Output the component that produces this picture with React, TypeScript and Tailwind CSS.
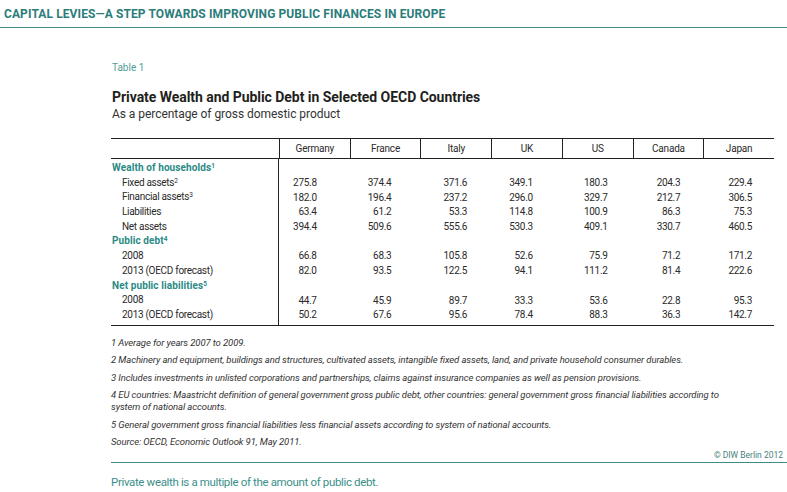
import React from "react";

const countries = ["Germany", "France", "Italy", "UK", "US", "Canada", "Japan"];

type Row =
  | { kind: "group"; label: string; sup: string }
  | { kind: "row"; label: string; sup?: string; values: string[] };

const rows: Row[] = [
  { kind: "group", label: "Wealth of households", sup: "1" },
  { kind: "row", label: "Fixed assets", sup: "2", values: ["275.8", "374.4", "371.6", "349.1", "180.3", "204.3", "229.4"] },
  { kind: "row", label: "Financial assets", sup: "3", values: ["182.0", "196.4", "237.2", "296.0", "329.7", "212.7", "306.5"] },
  { kind: "row", label: "Liabilities", values: ["63.4", "61.2", "53.3", "114.8", "100.9", "86.3", "75.3"] },
  { kind: "row", label: "Net assets", values: ["394.4", "509.6", "555.6", "530.3", "409.1", "330.7", "460.5"] },
  { kind: "group", label: "Public debt", sup: "4" },
  { kind: "row", label: "2008", values: ["66.8", "68.3", "105.8", "52.6", "75.9", "71.2", "171.2"] },
  { kind: "row", label: "2013 (OECD forecast)", values: ["82.0", "93.5", "122.5", "94.1", "111.2", "81.4", "222.6"] },
  { kind: "group", label: "Net public liabilities", sup: "5" },
  { kind: "row", label: "2008", values: ["44.7", "45.9", "89.7", "33.3", "53.6", "22.8", "95.3"] },
  { kind: "row", label: "2013 (OECD forecast)", values: ["50.2", "67.6", "95.6", "78.4", "88.3", "36.3", "142.7"] },
];

const pr = ["pr-[33px]", "pr-[29px]", "pr-[24px]", "pr-[29px]", "pr-[25px]", "pr-[23px]", "pr-[22px]"];

export default function App() {
  return (
    <div className="w-[787px] h-[492px] bg-white overflow-hidden font-['Roboto',sans-serif] text-[#231f20]">
      <div className="h-[28px] border-b-[1.5px] border-[#3d8c89] pl-[4px] pt-[7px]">
        <div className="text-[12px] font-bold text-[#2b7d7a] leading-[14px] tracking-[0.1px]">
          CAPITAL LEVIES—A STEP TOWARDS IMPROVING PUBLIC FINANCES IN EUROPE
        </div>
      </div>

      <div className="pl-[111px]">
        <div className="mt-[34px] text-[10px] leading-[12px] text-[#4f9e98] pl-[1px]">Table 1</div>
        <div className="mt-[15px] text-[14px] font-bold leading-[16px] text-[#231f20] pl-[1px] tracking-[-0.05px]">
          Private Wealth and Public Debt in Selected OECD Countries
        </div>
        <div className="mt-[2px] text-[12px] leading-[14px] text-[#333] pl-[1px] tracking-[-0.05px]">
          As a percentage of gross domestic product
        </div>

        <div className="mt-[17px] w-[663px] border-t border-b border-[#222] text-[10px] text-[#2a2a2a]">
          <div className="grid grid-cols-[168px_repeat(7,1fr)] h-[20px] border-b border-[#222] tracking-[-0.2px]">
            <div />
            {countries.map((c) => (
              <div key={c} className="border-l border-[#222] flex items-center justify-center leading-[12px]">
                {c}
              </div>
            ))}
          </div>
          <div className="flex tracking-[-0.3px]">
            <div className="w-[168px] shrink-0 border-r border-[#222] pt-[2px] pb-[2px]">
              {rows.map((r, i) =>
                r.kind === "group" ? (
                  <div key={i} className="h-[14.7px] leading-[14.7px] pl-[1px] font-bold text-[#2a8a85] whitespace-nowrap tracking-[0.1px]">
                    <span>{r.label}</span>
                    <span className="text-[6.5px] align-[3px] leading-none">{r.sup}</span>
                  </div>
                ) : (
                  <div key={i} className="h-[14.7px] leading-[14.7px] pl-[11px] whitespace-nowrap">
                    <span>{r.label}</span>
                    {r.sup && <span className="text-[6.5px] align-[3px] leading-none">{r.sup}</span>}
                  </div>
                )
              )}
            </div>
            <div className="flex-1 pt-[2px] pb-[2px]">
              {rows.map((r, i) => (
                <div key={i} className="grid grid-cols-7 h-[14.7px] items-center leading-[12px]">
                  {r.kind === "row"
                    ? r.values.map((v, j) => (
                        <div key={j} className={`text-right ${pr[j]}`}>
                          {v}
                        </div>
                      ))
                    : null}
                </div>
              ))}
            </div>
          </div>
        </div>

        <div className="text-[9.5px] italic leading-[12px] text-[#333] tracking-[-0.1px]">
          <div className="mt-[11px]">1 Average for years 2007 to 2009.</div>
          <div className="mt-[5.5px]">
            2 Machinery and equipment, buildings and structures, cultivated assets, intangible fixed assets, land, and private household consumer durables.
          </div>
          <div className="mt-[5.5px]">
            3 Includes investments in unlisted corporations and partnerships, claims against insurance companies as well as pension provisions.
          </div>
          <div className="mt-[5.5px] w-[620px]">
            4 EU countries: Maastricht definition of general government gross public debt, other countries: general government gross financial liabilities according to system of national accounts.
          </div>
          <div className="mt-[5.5px]">
            5 General government gross financial liabilities less financial assets according to system of national accounts.
          </div>
          <div className="mt-[5.5px]">Source: OECD, Economic Outlook 91, May 2011.</div>
        </div>

        <div className="mt-[2px] h-[13px] border-b-[1.5px] border-[#3d8c89] flex justify-end items-start pr-[4px]">
          <span className="text-[8.5px] leading-[10px] text-[#4a7f7c]">© DIW Berlin 2012</span>
        </div>
        <div className="mt-[12px] text-[11.5px] leading-[14px] text-[#3b8f8a] tracking-[-0.35px]">
          Private wealth is a multiple of the amount of public debt.
        </div>
      </div>
    </div>
  );
}
